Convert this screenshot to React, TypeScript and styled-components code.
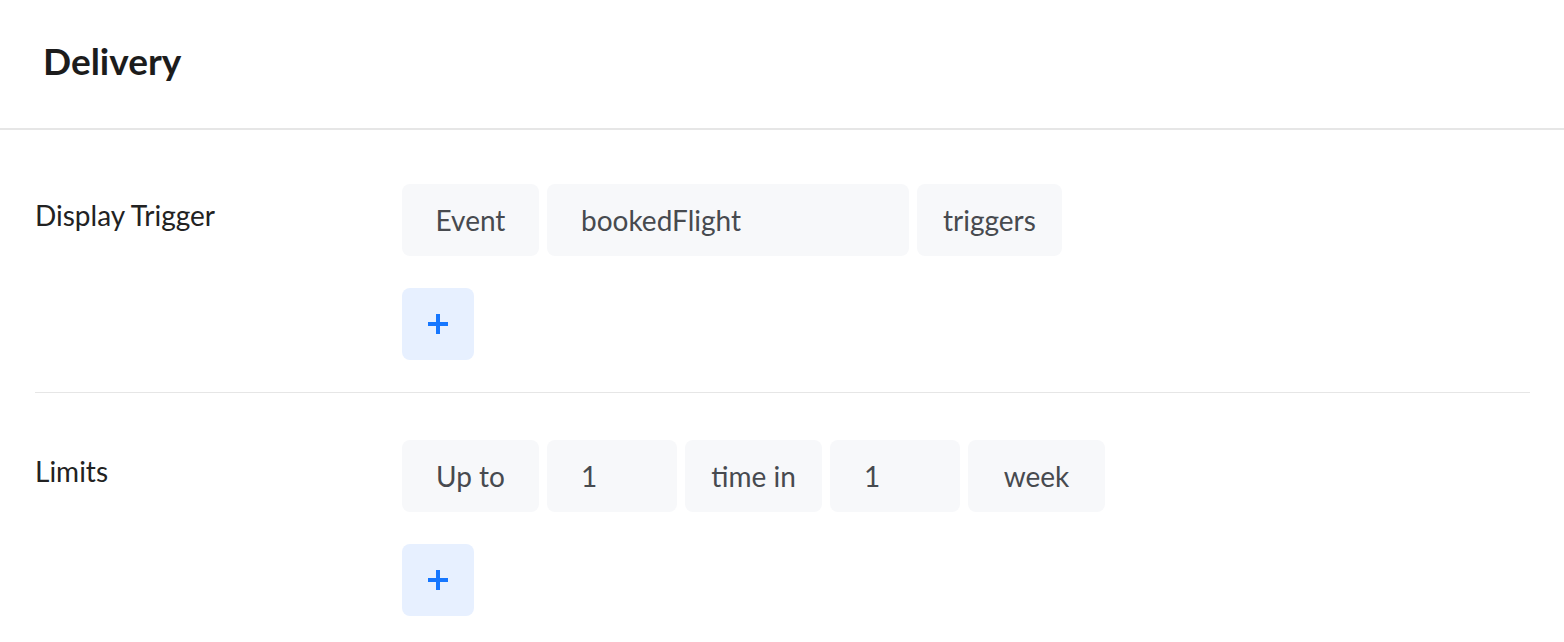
import { FC } from 'react';
import styled, { createGlobalStyle } from 'styled-components';

const GlobalStyle = createGlobalStyle`
  html, body {
    margin: 0;
    padding: 0;
    background: #ffffff;
  }
  body {
    font-family: "Lato", "Noto Sans", sans-serif;
  }
`;

type Chip = { text: string; input?: boolean; width?: number };

type Section = { label: string; chips: Chip[] };

const sections: Section[] = [
  {
    label: 'Display Trigger',
    chips: [
      { text: 'Event' },
      { text: 'bookedFlight', input: true, width: 362 },
      { text: 'triggers' },
    ],
  },
  {
    label: 'Limits',
    chips: [
      { text: 'Up to' },
      { text: '1', input: true, width: 130 },
      { text: 'time in' },
      { text: '1', input: true, width: 130 },
      { text: 'week' },
    ],
  },
];

const App: FC = (): JSX.Element => {
  return (
    <Page>
      <GlobalStyle />
      <Header>
        <Title>Delivery</Title>
      </Header>
      <Body>
        {sections.map((section, i) => (
          <Row key={section.label} $last={i === sections.length - 1}>
            <Label>{section.label}</Label>
            <Controls>
              <ChipRow>
                {section.chips.map((chip, j) => (
                  <ChipBox key={j} $input={chip.input} $width={chip.width}>
                    {chip.text}
                  </ChipBox>
                ))}
              </ChipRow>
              <AddButton aria-label="Add">
                <svg width="20" height="20" viewBox="0 0 20 20">
                  <rect x="8" y="0" width="4" height="20" fill="#1677ff" />
                  <rect x="0" y="8" width="20" height="4" fill="#1677ff" />
                </svg>
              </AddButton>
            </Controls>
          </Row>
        ))}
      </Body>
    </Page>
  );
};

const Page = styled.div`
  width: 1564px;
  min-height: 642px;
  background: #ffffff;
`;

const Header = styled.div`
  height: 130px;
  box-sizing: border-box;
  padding: 0 0 8px 43px;
  display: flex;
  align-items: center;
  border-bottom: 2px solid #e6e6e6;
`;

const Title = styled.h1`
  margin: 0;
  font-family: "Lato", sans-serif;
  font-weight: 700;
  font-size: 37px;
  color: #1c1c1c;
`;

const Body = styled.div`
  padding: 7px 34px 0 35px;
`;

const Row = styled.div<{ $last?: boolean }>`
  display: flex;
  padding: 47px 0 32px;
  border-bottom: ${({ $last }) => ($last ? 'none' : '1px solid #e6e6e6')};
`;

const Label = styled.div`
  width: 367px;
  font-size: 28px;
  color: #222222;
  line-height: 62px;
`;

const Controls = styled.div`
  display: flex;
  flex-direction: column;
  gap: 32px;
`;

const ChipRow = styled.div`
  display: flex;
  gap: 8px;
`;

const ChipBox = styled.div<{ $input?: boolean; $width?: number }>`
  height: 72px;
  box-sizing: border-box;
  min-width: ${({ $input }) => ($input ? '0' : '137px')};
  padding: ${({ $input }) => ($input ? '0 34px' : '0 26px')};
  display: flex;
  align-items: center;
  justify-content: ${({ $input }) => ($input ? 'flex-start' : 'center')};
  width: ${({ $width }) => ($width ? `${$width}px` : 'auto')};
  background: #f7f8fa;
  border-radius: 8px;
  font-size: 28px;
  color: #474a4f;
`;

const AddButton = styled.button`
  width: 72px;
  height: 72px;
  border: none;
  border-radius: 8px;
  background: #e7f0ff;
  display: flex;
  align-items: center;
  justify-content: center;
  padding: 0;
  cursor: pointer;
`;

export default App;
